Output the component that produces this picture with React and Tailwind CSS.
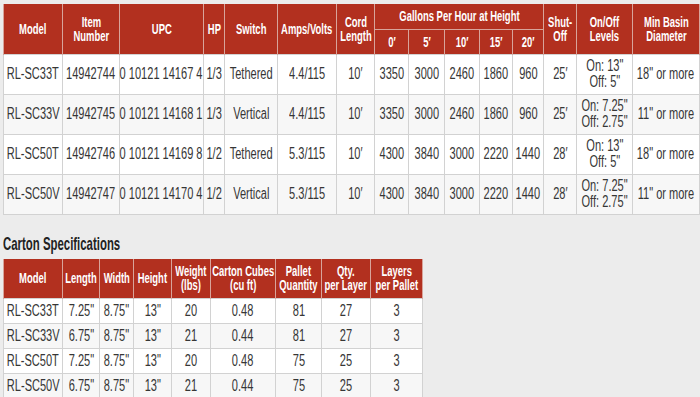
import React from 'react';

const font = { fontFamily: '"Liberation Sans", Arial, sans-serif' };

const pumps = [
  ['RL-SC33T', '14942744', '0 10121 14167 4', '1/3', 'Tethered', '4.4/115', '10′', ['3350', '3000', '2460', '1860', '960'], '25′', ['On: 13"', 'Off: 5"'], '18" or more'],
  ['RL-SC33V', '14942745', '0 10121 14168 1', '1/3', 'Vertical', '4.4/115', '10′', ['3350', '3000', '2460', '1860', '960'], '25′', ['On: 7.25"', 'Off: 2.75"'], '11" or more'],
  ['RL-SC50T', '14942746', '0 10121 14169 8', '1/2', 'Tethered', '5.3/115', '10′', ['4300', '3840', '3000', '2220', '1440'], '28′', ['On: 13"', 'Off: 5"'], '18" or more'],
  ['RL-SC50V', '14942747', '0 10121 14170 4', '1/2', 'Vertical', '5.3/115', '10′', ['4300', '3840', '3000', '2220', '1440'], '28′', ['On: 7.25"', 'Off: 2.75"'], '11" or more'],
];

const cartons = [
  ['RL-SC33T', '7.25"', '8.75"', '13"', '20', '0.48', '81', '27', '3'],
  ['RL-SC33V', '6.75"', '8.75"', '13"', '21', '0.44', '81', '27', '3'],
  ['RL-SC50T', '7.25"', '8.75"', '13"', '20', '0.48', '75', '25', '3'],
  ['RL-SC50V', '6.75"', '8.75"', '13"', '21', '0.44', '75', '25', '3'],
];

const th = 'border-x border-[#d8a49b] font-bold text-white text-[15px] leading-[14px] text-center align-middle p-0';
const td = 'border border-[#d2d2d2] text-[16px] leading-[16px] text-[#363636] text-center align-middle p-0';

// The reference uses a tight condensed face; squeeze Liberation Sans horizontally
function Narrow({ children, head }) {
  return (
    <div className="flex justify-center">
      <span className={`shrink-0 whitespace-nowrap ${head ? 'scale-x-[0.63]' : 'scale-x-[0.69]'}`}>{children}</span>
    </div>
  );
}

export default function App() {
  return (
    <div className="w-[700px] h-[397px] overflow-hidden bg-[#ececec] pt-[4px] pl-[3px]" style={font}>
      {/* Pump specs */}
      <table className="table-fixed w-[696px] border-collapse bg-white">
        <colgroup>
          {[59, 57, 84, 21, 53, 59, 38, 34, 36, 35, 33, 31, 33, 56, 67].map((w, i) => (
            <col key={i} style={{ width: w }} />
          ))}
        </colgroup>
        <thead className="bg-[#b2301f]">
          <tr className="h-[25px]">
            <th rowSpan={2} className={th}><Narrow head>Model</Narrow></th>
            <th rowSpan={2} className={th}><Narrow head>Item<br />Number</Narrow></th>
            <th rowSpan={2} className={th}><Narrow head>UPC</Narrow></th>
            <th rowSpan={2} className={th}><Narrow head>HP</Narrow></th>
            <th rowSpan={2} className={th}><Narrow head>Switch</Narrow></th>
            <th rowSpan={2} className={th}><Narrow head>Amps/Volts</Narrow></th>
            <th rowSpan={2} className={th}><Narrow head>Cord<br />Length</Narrow></th>
            <th colSpan={5} className={`${th} border-b`}><Narrow head>Gallons Per Hour at Height</Narrow></th>
            <th rowSpan={2} className={th}><Narrow head>Shut-<br />Off</Narrow></th>
            <th rowSpan={2} className={th}><Narrow head>On/Off<br />Levels</Narrow></th>
            <th rowSpan={2} className={th}><Narrow head>Min Basin<br />Diameter</Narrow></th>
          </tr>
          <tr className="h-[25px]">
            {['0′', '5′', '10′', '15′', '20′'].map((h) => (
              <th key={h} className={th}><Narrow head>{h}</Narrow></th>
            ))}
          </tr>
        </thead>
        <tbody>
          {pumps.map((r, i) => (
            <tr key={r[0]} className={`h-[40px] ${i % 2 ? 'bg-[#f7f7f7]' : 'bg-white'}`}>
              {r.slice(0, 7).map((c, j) => (
                <td key={j} className={td}><Narrow>{c}</Narrow></td>
              ))}
              {r[7].map((c, j) => (
                <td key={`g${j}`} className={td}><Narrow>{c}</Narrow></td>
              ))}
              <td className={td}><Narrow>{r[8]}</Narrow></td>
              <td className={`${td} text-[15px] leading-[14px]`}><Narrow>{r[9][0]}<br />{r[9][1]}</Narrow></td>
              <td className={td}><Narrow>{r[10]}</Narrow></td>
            </tr>
          ))}
        </tbody>
      </table>

      <h2 className="mt-[17px] mb-[4px] h-[23px] text-[19px] leading-[23px] font-bold text-[#222]">
        <span className="inline-block origin-left scale-x-[0.6] whitespace-nowrap">Carton Specifications</span>
      </h2>

      {/* Carton specs */}
      <table className="table-fixed w-[419px] border-collapse bg-white">
        <colgroup>
          {[59, 37, 34, 38, 39, 65, 46, 49, 52].map((w, i) => (
            <col key={i} style={{ width: w }} />
          ))}
        </colgroup>
        <thead className="bg-[#b2301f]">
          <tr className="h-[40px]">
            <th className={th}><Narrow head>Model</Narrow></th>
            <th className={th}><Narrow head>Length</Narrow></th>
            <th className={th}><Narrow head>Width</Narrow></th>
            <th className={th}><Narrow head>Height</Narrow></th>
            <th className={th}><Narrow head>Weight<br />(lbs)</Narrow></th>
            <th className={th}><Narrow head>Carton Cubes<br />(cu ft)</Narrow></th>
            <th className={th}><Narrow head>Pallet<br />Quantity</Narrow></th>
            <th className={th}><Narrow head>Qty.<br />per Layer</Narrow></th>
            <th className={th}><Narrow head>Layers<br />per Pallet</Narrow></th>
          </tr>
        </thead>
        <tbody>
          {cartons.map((r, i) => (
            <tr key={r[0]} className={`h-[25px] ${i % 2 ? 'bg-[#f7f7f7]' : 'bg-white'}`}>
              {r.map((c, j) => (
                <td key={j} className={td}><Narrow>{c}</Narrow></td>
              ))}
            </tr>
          ))}
        </tbody>
      </table>
    </div>
  );
}
